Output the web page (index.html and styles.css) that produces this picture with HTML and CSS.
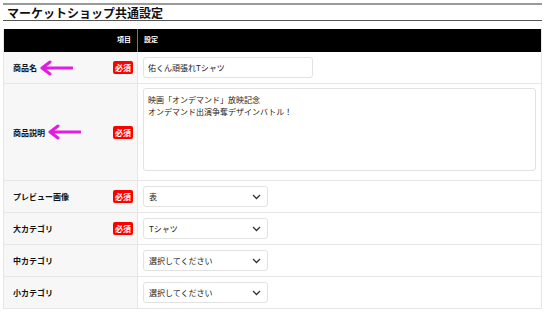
FILE: index.html
```html
<!DOCTYPE html>
<html>
<head>
<meta charset="utf-8">
<link rel="stylesheet" href="styles.css">
</head>
<body>

<div class="settings">
  <h2 class="settings-title">マーケットショップ共通設定</h2>

  <div class="form-table">
    <div class="head-cell head-label">項目</div>
    <div class="head-cell head-value">設定</div>

    <div class="label-cell">
      <span class="label-text">商品名</span>
      <span class="required">必須</span>
      <svg class="pointer pointer-name" width="34" height="16" viewBox="0 0 34 16">
        <path d="M33 8 H4 M11 2 L3 8 L11 14" fill="none" stroke="#e21ce2" stroke-width="3" stroke-linecap="round" stroke-linejoin="round"/>
      </svg>
    </div>
    <div class="value-cell">
      <input class="text-input" type="text" value="佑くん頑張れTシャツ">
    </div>

    <div class="label-cell">
      <span class="label-text">商品説明</span>
      <span class="required">必須</span>
      <svg class="pointer pointer-desc" width="34" height="16" viewBox="0 0 34 16">
        <path d="M33 8 H4 M11 2 L3 8 L11 14" fill="none" stroke="#e21ce2" stroke-width="3" stroke-linecap="round" stroke-linejoin="round"/>
      </svg>
    </div>
    <div class="value-cell">
      <textarea class="text-area">映画「オンデマンド」放映記念
オンデマンド出演争奪デザインバトル！</textarea>
    </div>

    <div class="label-cell">
      <span class="label-text">プレビュー画像</span>
      <span class="required">必須</span>
    </div>
    <div class="value-cell">
      <div class="select-box"><span>表</span><svg width="9" height="6" viewBox="0 0 9 6"><path d="M1 1 L4.5 4.5 L8 1" fill="none" stroke="#333" stroke-width="1.3"/></svg></div>
    </div>

    <div class="label-cell">
      <span class="label-text">大カテゴリ</span>
      <span class="required">必須</span>
    </div>
    <div class="value-cell">
      <div class="select-box"><span>Tシャツ</span><svg width="9" height="6" viewBox="0 0 9 6"><path d="M1 1 L4.5 4.5 L8 1" fill="none" stroke="#333" stroke-width="1.3"/></svg></div>
    </div>

    <div class="label-cell">
      <span class="label-text">中カテゴリ</span>
    </div>
    <div class="value-cell">
      <div class="select-box"><span>選択してください</span><svg width="9" height="6" viewBox="0 0 9 6"><path d="M1 1 L4.5 4.5 L8 1" fill="none" stroke="#333" stroke-width="1.3"/></svg></div>
    </div>

    <div class="label-cell">
      <span class="label-text">小カテゴリ</span>
    </div>
    <div class="value-cell">
      <div class="select-box"><span>選択してください</span><svg width="9" height="6" viewBox="0 0 9 6"><path d="M1 1 L4.5 4.5 L8 1" fill="none" stroke="#333" stroke-width="1.3"/></svg></div>
    </div>
  </div>
</div>

</body>
</html>
```

FILE: styles.css
```css
body {
  margin: 0;
  background-color: #fff;
  font-family: "Noto Sans CJK JP", "Liberation Sans", sans-serif;
  color: #222;
}

.settings {
  margin: 3px 4px 0 3px;
  border-top: 2px solid #9a9a9a;
}

.settings-title {
  margin: 0;
  padding: 0 0 0 4px;
  height: 15px;
  font-size: 12px;
  line-height: 15px;
  font-weight: bold;
  color: #111;
  border-bottom: 1px solid #555;
}

.form-table {
  display: grid;
  grid-template-columns: 134px 1fr;
  margin-top: 8px;
  border-right: 1px solid #e6e6e6;
  border-left: 1px solid #e6e6e6;
}

.head-cell {
  background-color: #000;
  color: #fff;
  font-size: 7px;
  font-weight: bold;
  height: 23px;
  line-height: 21px;
}

.head-label {
  text-align: right;
  padding-right: 6px;
  border-right: 1px solid #777;
}

.head-value {
  padding-left: 6px;
}

.label-cell {
  position: relative;
  display: flex;
  align-items: center;
  justify-content: space-between;
  padding: 0 4px 0 9px;
  min-height: 31px;
  background-color: #f7f7f7;
  border-bottom: 1px solid #e6e6e6;
  border-right: 1px solid #e6e6e6;
}

.value-cell {
  display: flex;
  align-items: center;
  padding-left: 5px;
  padding-right: 5px;
  min-height: 31px;
  border-bottom: 1px solid #e6e6e6;
}

.label-text {
  font-size: 8px;
  font-weight: bold;
  color: #111;
}

.required {
  background-color: #f00;
  color: #fff;
  font-size: 8px;
  font-weight: bold;
  line-height: 13px;
  height: 13px;
  padding: 0 2px;
  border-radius: 2px;
}

.pointer {
  position: absolute;
  top: 50%;
  margin-top: -8px;
}

.pointer-name {
  left: 35px;
}

.pointer-desc {
  left: 43px;
}

.text-input {
  box-sizing: border-box;
  width: 170px;
  height: 21px;
  padding: 0 4px;
  border: 1px solid #e2e2e2;
  border-radius: 3px;
  font-family: inherit;
  font-size: 8px;
  color: #222;
}

.text-area {
  box-sizing: border-box;
  width: 393px;
  height: 83px;
  margin: 4px 0 9px 0;
  padding: 5px 4px;
  border: 1px solid #e2e2e2;
  border-radius: 3px;
  font-family: inherit;
  font-size: 8px;
  line-height: 12px;
  color: #222;
  resize: none;
}

.select-box {
  box-sizing: border-box;
  display: flex;
  align-items: center;
  justify-content: space-between;
  width: 125px;
  height: 21px;
  padding: 0 6px 0 5px;
  border: 1px solid #e2e2e2;
  border-radius: 3px;
  font-size: 8px;
  color: #222;
}
```
